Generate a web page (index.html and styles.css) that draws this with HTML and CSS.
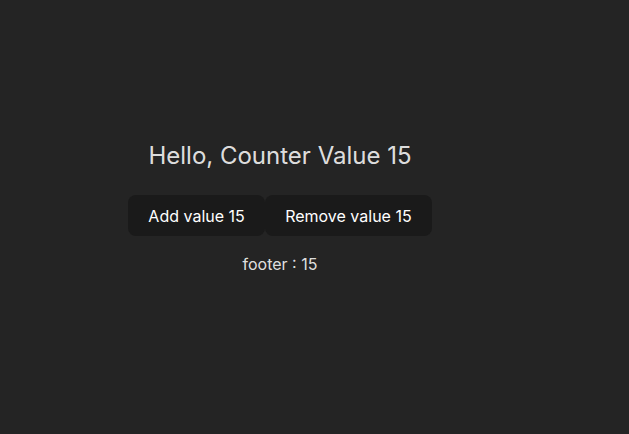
FILE: index.html
```html
<!DOCTYPE html>
<html>
<head>
<meta charset="utf-8">
<link rel="stylesheet" href="styles.css">
</head>
<body>
<div class="app">
  <h1 class="title">Hello, Counter Value 15</h1>
  <div class="actions">
    <button class="btn">Add value 15</button>
    <button class="btn">Remove value 15</button>
  </div>
  <p class="footer">footer : 15</p>
</div>
</body>
</html>
```
FILE: styles.css
```css
html, body {
  margin: 0;
  height: 100%;
}
body {
  background: #242424;
  color: rgba(255, 255, 255, 0.87);
  font-family: Inter, "Noto Sans", sans-serif;
  font-size: 16px;
  line-height: 1.5;
  display: flex;
  align-items: center;
  padding: 0 0 20px 128px;
  box-sizing: border-box;
}
.app {
  width: 304px;
  display: flex;
  flex-direction: column;
  align-items: center;
  text-align: center;
}
.title {
  margin: 0;
  font-size: 24px;
  font-weight: 400;
  line-height: 36px;
}
.actions {
  display: flex;
  margin-top: 21px;
}
.btn {
  flex-shrink: 0;
  white-space: nowrap;
  font-family: inherit;
  font-size: 16px;
  font-weight: 400;
  line-height: normal;
  color: #fff;
  background: #1a1a1a;
  border: 1px solid transparent;
  border-radius: 8px;
  padding: 9.6px 19.2px;
}
.footer {
  margin: 16px 0 0;
  line-height: 24px;
}
```
